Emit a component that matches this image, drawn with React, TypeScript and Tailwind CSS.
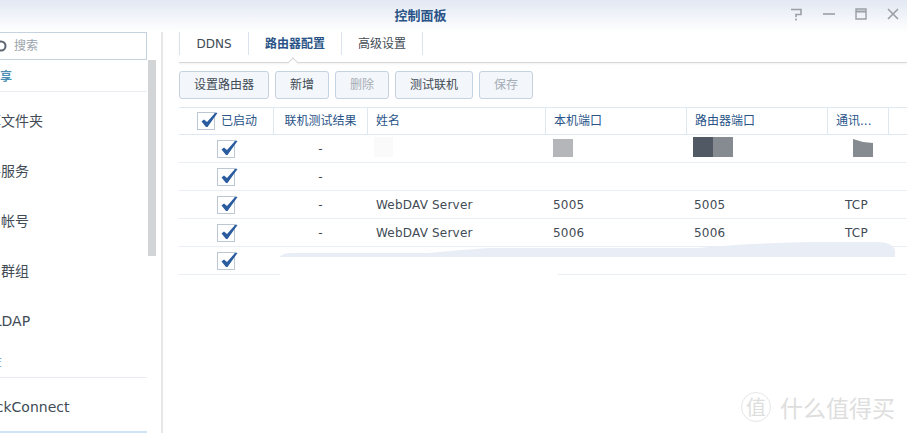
const FONT = "font-['DejaVu_Sans','Noto_Sans_CJK_SC',sans-serif]";

const COLS = "grid grid-cols-[95px_94px_178px_141px_141px_61px_1fr]";

function Check({ className = "" }: { className?: string }) {
  return (
    <span className={`relative block w-[18px] h-[18px] border border-[#bcc7d4] bg-white ${className}`}>
      <svg className="absolute left-[1px] top-[-2px]" width="20" height="18" viewBox="0 0 20 18">
        <path d="M2.5 10.5 L5 8.5 L8 11 L16.5 1.5 L18.5 2 L8.5 16 L7 16 Z" fill="#2a5c9f" />
      </svg>
    </span>
  );
}

function SideItem({ label, indent = "-ml-[27px]" }: { label: string; indent?: string }) {
  return <div className={`h-[50px] flex items-center text-[14px] text-[#414b55] whitespace-nowrap ${indent}`}>{label}</div>;
}

function WindowIcons() {
  return (
    <div className="absolute right-[7px] top-[7px] flex items-center gap-[18px]">
      <svg width="14" height="14" viewBox="0 0 14 14" fill="none" stroke="#9a9fa5" strokeWidth="1.6">
        <path d="M1 2.5 H11 V7.5 H6 V10" />
        <path d="M6 11.5 V13.5" />
      </svg>
      <svg width="14" height="14" viewBox="0 0 14 14" fill="none" stroke="#9a9fa5" strokeWidth="1.6">
        <path d="M1 7 H13" />
      </svg>
      <svg width="14" height="14" viewBox="0 0 14 14" fill="none" stroke="#9a9fa5" strokeWidth="1.4">
        <path d="M2 2 H12 V12 H2 Z" />
        <path d="M2 4.5 H12" strokeWidth="2" />
      </svg>
      <svg width="14" height="14" viewBox="0 0 14 14" fill="none" stroke="#9a9fa5" strokeWidth="1.6">
        <path d="M2 2 L12 12 M12 2 L2 12" />
      </svg>
    </div>
  );
}

function ToolButton({ label, disabled = false, width }: { label: string; disabled?: boolean; width: string }) {
  return (
    <button
      className={`h-[28px] ${width} rounded-[3px] border border-[#c5d2e0] bg-[#f3f6fb] text-[12px] ${disabled ? "text-[#a6adb5]" : "text-[#414b55]"}`}
    >
      {label}
    </button>
  );
}

const headers = ["姓名", "本机端口", "路由器端口", "通讯..."];

const rows = [
  { test: "-", name: "", local: "", router: "", proto: "" },
  { test: "-", name: "", local: "", router: "", proto: "" },
  { test: "-", name: "WebDAV Server", local: "5005", router: "5005", proto: "TCP" },
  { test: "-", name: "WebDAV Server", local: "5006", router: "5006", proto: "TCP" },
  { test: "", name: "", local: "", router: "", proto: "" },
];

export default function App() {
  return (
    <div className={`relative w-[907px] h-[433px] overflow-hidden bg-white flex flex-col ${FONT}`}>
      {/* title bar */}
      <div className="relative h-[32px] shrink-0 bg-gradient-to-b from-[#e2e8f2] to-white flex items-center justify-center">
        <span className="text-[13px] font-bold text-[#2a5488] ml-[-66px]">控制面板</span>
        <WindowIcons />
      </div>

      <div className="flex flex-1 min-h-0">
        {/* sidebar */}
        <div className="w-[163px] shrink-0 border-r-2 border-[#e6e6e6] overflow-hidden">
          <div className="w-[147px] h-[28px] border border-l-0 border-[#c5d2e0] flex items-center">
            <svg className="-ml-[4px]" width="12" height="12" viewBox="0 0 12 12" fill="none" stroke="#5a6570" strokeWidth="2">
              <circle cx="5" cy="6" r="4.5" />
            </svg>
            <span className="ml-[6px] text-[12px] text-[#9ba3ab]">搜索</span>
          </div>
          <div className="flex">
            <div className="w-[147px]">
              <div className="h-[32px] flex items-center border-b border-[#e9edf2] text-[12px] font-bold text-[#4b8fb5] pt-[3px] overflow-hidden">
                <span className="-ml-[12px]">共享</span>
              </div>
              <div className="h-[4px]" />
              <SideItem label="共享文件夹" />
              <SideItem label="文件服务" />
              <SideItem label="用户帐号" />
              <SideItem label="用户群组" />
              <SideItem label="域/LDAP" indent="-ml-[25px]" />
              <div className="h-[32px] flex items-center border-b border-[#e9edf2] text-[12px] text-[#6fa3d8] overflow-hidden">
                <span className="-ml-[34px]">连接性</span>
              </div>
              <div className="h-[55px] flex items-center pt-[6px] text-[14px] text-[#414b55] whitespace-nowrap border-b-2 border-[#cfe3f7]">
                <span className="-ml-[28px]">QuickConnect</span>
              </div>
            </div>
            <div className="ml-[1px] w-[8px] h-[196px] bg-[#d2d4d6]" />
          </div>
        </div>

        {/* main */}
        <div className="flex-1 min-w-0 pl-[16px]">
          <div className="relative h-[31px] flex border-b border-[#d8d8d8] shadow-[0_1px_2px_rgba(0,0,0,0.06)]">
            <div className="w-[70px] h-[23px] mt-0 border-l border-r border-[#dbe4ee] flex items-center justify-center text-[12px] text-[#414b55]">DDNS</div>
            <div className="w-[93px] h-[23px] border-r border-[#dbe4ee] flex items-center justify-center text-[12px] font-bold text-[#2a5488]">路由器配置</div>
            <div className="w-[81px] h-[23px] border-r border-[#dbe4ee] flex items-center justify-center text-[12px] text-[#414b55]">高级设置</div>
            <span className="absolute left-[110px] bottom-[-5px] w-[8px] h-[8px] rotate-45 bg-white border-l border-t border-[#d8d8d8]" />
          </div>

          <div className="flex gap-[6px] mt-[8px]">
            <ToolButton label="设置路由器" width="w-[90px]" />
            <ToolButton label="新增" width="w-[54px]" />
            <ToolButton label="删除" disabled width="w-[54px]" />
            <ToolButton label="测试联机" width="w-[78px]" />
            <ToolButton label="保存" disabled width="w-[54px]" />
          </div>

          <div className="mt-[8px] w-[728px]">
            <div className={`${COLS} h-[28px] border-t border-b border-[#dfe7f0] text-[12px] text-[#2a5488]`}>
              <div className="flex items-center border-r border-[#dfe7f0] pl-[18px] gap-[6px]">
                <Check />
                <span>已启动</span>
              </div>
              <div className="flex items-center justify-center border-r border-[#dfe7f0] whitespace-nowrap">联机测试结果</div>
              {headers.map((h) => (
                <div key={h} className="flex items-center border-r border-[#dfe7f0] pl-[8px] whitespace-nowrap">{h}</div>
              ))}
              <div />
            </div>

            {rows.map((r, i) => (
              <div key={i} className={`${COLS} h-[28px] border-b border-[#e9eef5] text-[12px] text-[#414b55] tracking-[0.2px]`}>
                <div className="flex items-center pl-[38px]"><Check /></div>
                <div className="flex items-center justify-center -ml-[1px]">{r.test}</div>
                <div className="flex items-center pl-[8px] whitespace-nowrap">{r.name}</div>
                <div className="flex items-center pl-[7px]">{r.local}</div>
                <div className="flex items-center pl-[7px]">{r.router}</div>
                <div className="flex items-center pl-[17px]">{r.proto}</div>
                <div />
              </div>
            ))}
          </div>
        </div>
      </div>

      {/* redaction patches painted over the screenshot */}
      <div className="absolute left-[374px] top-[137px] w-[19px] h-[20px] bg-[#fafafa]" />
      <div className="absolute left-[553px] top-[139px] w-[20px] h-[18px] bg-[#b4b6b9]" />
      <div className="absolute left-[693px] top-[137px] w-[20px] h-[20px] bg-[#515a64]" />
      <div className="absolute left-[713px] top-[137px] w-[20px] h-[20px] bg-[#858b91]" />
      <svg className="absolute left-[853px] top-[139px]" width="20" height="18" viewBox="0 0 20 18">
        <path d="M0 0 L10 3 L20 4 V18 H0 Z" fill="#858b91" />
      </svg>
      <svg className="absolute left-[278px] top-[240px]" width="620" height="36" viewBox="0 0 620 36">
        <path d="M2 17 Q4 13 14 13 H150 Q180 10 210 8 H420 Q470 3 540 2 H600 Q614 2 617 10 V17 Z" fill="#e9eef6" />
        <rect x="2" y="17" width="278" height="19" fill="white" />
        <rect x="280" y="17" width="338" height="16" fill="white" />
      </svg>

      {/* watermark */}
      <div className="absolute left-[741px] top-[392px] flex items-center gap-[9px] text-[#dedede]">
        <div className="w-[30px] h-[30px] rounded-full border border-[#e6e6e6] flex items-center justify-center text-[20px] font-['Noto_Sans_CJK_SC',sans-serif]">值</div>
        <span className="text-[23px] leading-[30px] font-['Noto_Sans_CJK_SC',sans-serif] whitespace-nowrap">什么值得买</span>
      </div>
    </div>
  );
}
